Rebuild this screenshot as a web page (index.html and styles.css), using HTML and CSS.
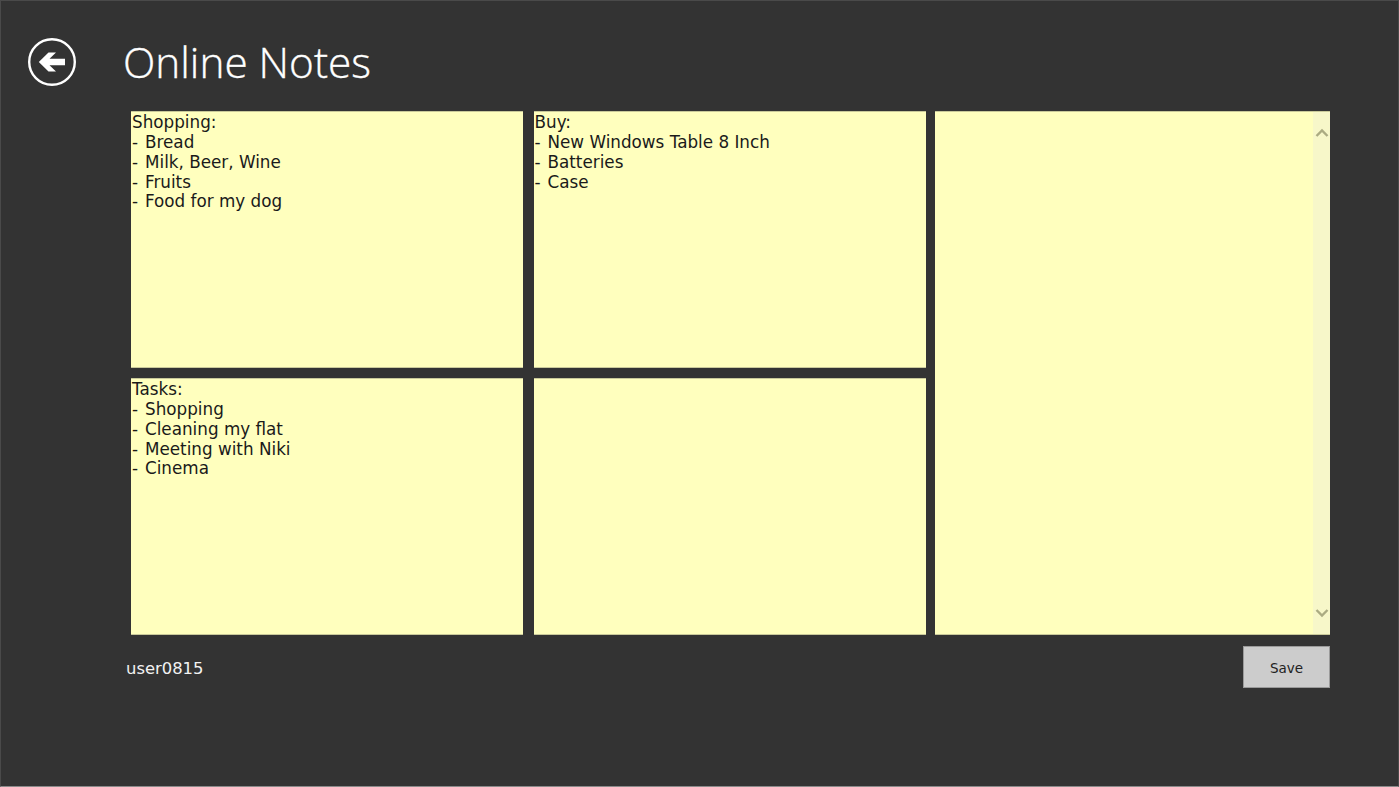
FILE: index.html
```html
<!DOCTYPE html>
<html lang="en">
<head>
<meta charset="utf-8">
<title>Online Notes</title>
<link rel="stylesheet" href="styles.css">
</head>
<body>
<div class="page">
  <header class="header">
    <button class="back" aria-label="Back">
      <svg viewBox="0 0 50 50" width="50" height="50" aria-hidden="true">
        <circle cx="25" cy="25" r="22.8" fill="none" stroke="#fff" stroke-width="2.4"/>
        <path d="M11.8 25 L21.5 15.5 H29 L22.5 21.7 H38 V28.3 H22.5 L29 34.5 H21.5 Z" fill="#fff"/>
      </svg>
    </button>
    <h1 class="title">Online Notes</h1>
  </header>
  <main class="board">
    <div class="notes">
      <div class="note">
        <div>Shopping:</div>
        <div><span class="dash">-</span> Bread</div>
        <div><span class="dash">-</span> Milk, Beer, Wine</div>
        <div><span class="dash">-</span> Fruits</div>
        <div><span class="dash">-</span> Food for my dog</div>
      </div>
      <div class="note">
        <div>Buy:</div>
        <div><span class="dash">-</span> New Windows Table 8 Inch</div>
        <div><span class="dash">-</span> Batteries</div>
        <div><span class="dash">-</span> Case</div>
      </div>
      <div class="note">
        <div>Tasks:</div>
        <div><span class="dash">-</span> Shopping</div>
        <div><span class="dash">-</span> Cleaning my flat</div>
        <div><span class="dash">-</span> Meeting with Niki</div>
        <div><span class="dash">-</span> Cinema</div>
      </div>
      <div class="note"></div>
    </div>
    <div class="note note-tall">
      <div class="scrollbar">
        <svg viewBox="0 0 14 10" width="14" height="10" aria-hidden="true"><path d="M1.5 8 L7 2.5 L12.5 8" fill="none" stroke="#abab82" stroke-width="2.4"/></svg>
        <svg viewBox="0 0 14 10" width="14" height="10" aria-hidden="true"><path d="M1.5 2 L7 7.5 L12.5 2" fill="none" stroke="#abab82" stroke-width="2.4"/></svg>
      </div>
    </div>
  </main>
  <footer class="footer">
    <span class="user">user0815</span>
    <button class="save">Save</button>
  </footer>
</div>
</body>
</html>
```
FILE: styles.css
```css
* { box-sizing: border-box; }
html, body { margin: 0; height: 100%; }
body { background: #333333; overflow: hidden; }
.page {
  height: 787px;
  border: 1px solid #4a4a4a;
  border-bottom-color: #8a8a8a;
  font-family: "DejaVu Sans", sans-serif;
}
.header {
  display: flex;
  align-items: flex-start;
  height: 110px;
  padding: 36px 0 0 26px;
}
.back {
  width: 50px;
  height: 50px;
  padding: 0;
  border: 0;
  background: none;
  display: block;
}
.back svg { display: block; }
.title {
  margin: -10px 0 0 46px;
  font-family: "Open Sans", sans-serif;
  font-weight: 300;
  font-size: 42.3px;
  line-height: 70px;
  color: #fff;
  -webkit-text-stroke: 0.35px #fff;
}
.board {
  display: flex;
  margin-left: 130px;
  width: 1199px;
  height: 525px;
}
.notes {
  display: grid;
  grid-template-columns: 392px 392px;
  grid-template-rows: 257px 257px;
  column-gap: 10.5px;
  row-gap: 10px;
}
.note {
  background: #ffffbe;
  color: #1a1a1a;
  border: 1px solid #c9c99a;
  border-width: 1px 0;
  padding: 1px 0 0 1px;
  font-size: 16.8px;
  line-height: 19.85px;
  overflow: hidden;
}
.dash { margin-right: 1.6px; }
.note-tall {
  width: 396px;
  height: 524px;
  margin-left: 9.5px;
  padding: 0;
  display: flex;
  justify-content: flex-end;
}
.scrollbar {
  width: 17px;
  background: #f7f7c9;
  display: flex;
  flex-direction: column;
  justify-content: space-between;
  align-items: center;
  padding: 16px 0 16px;
}
.scrollbar svg { display: block; }
.footer {
  display: flex;
  justify-content: space-between;
  align-items: center;
  margin-left: 125px;
  width: 1204px;
  height: 42px;
  margin-top: 10px;
}
.user {
  font-size: 16.4px;
  color: #f2f2f2;
  padding-top: 2px;
}
.save {
  width: 87px;
  height: 42px;
  padding: 2px 0 0;
  border: 1px solid #9a9a9a;
  border-radius: 0;
  background: #cccccc;
  color: #222;
  font-family: "DejaVu Sans", sans-serif;
  font-size: 13.5px;
}
```
